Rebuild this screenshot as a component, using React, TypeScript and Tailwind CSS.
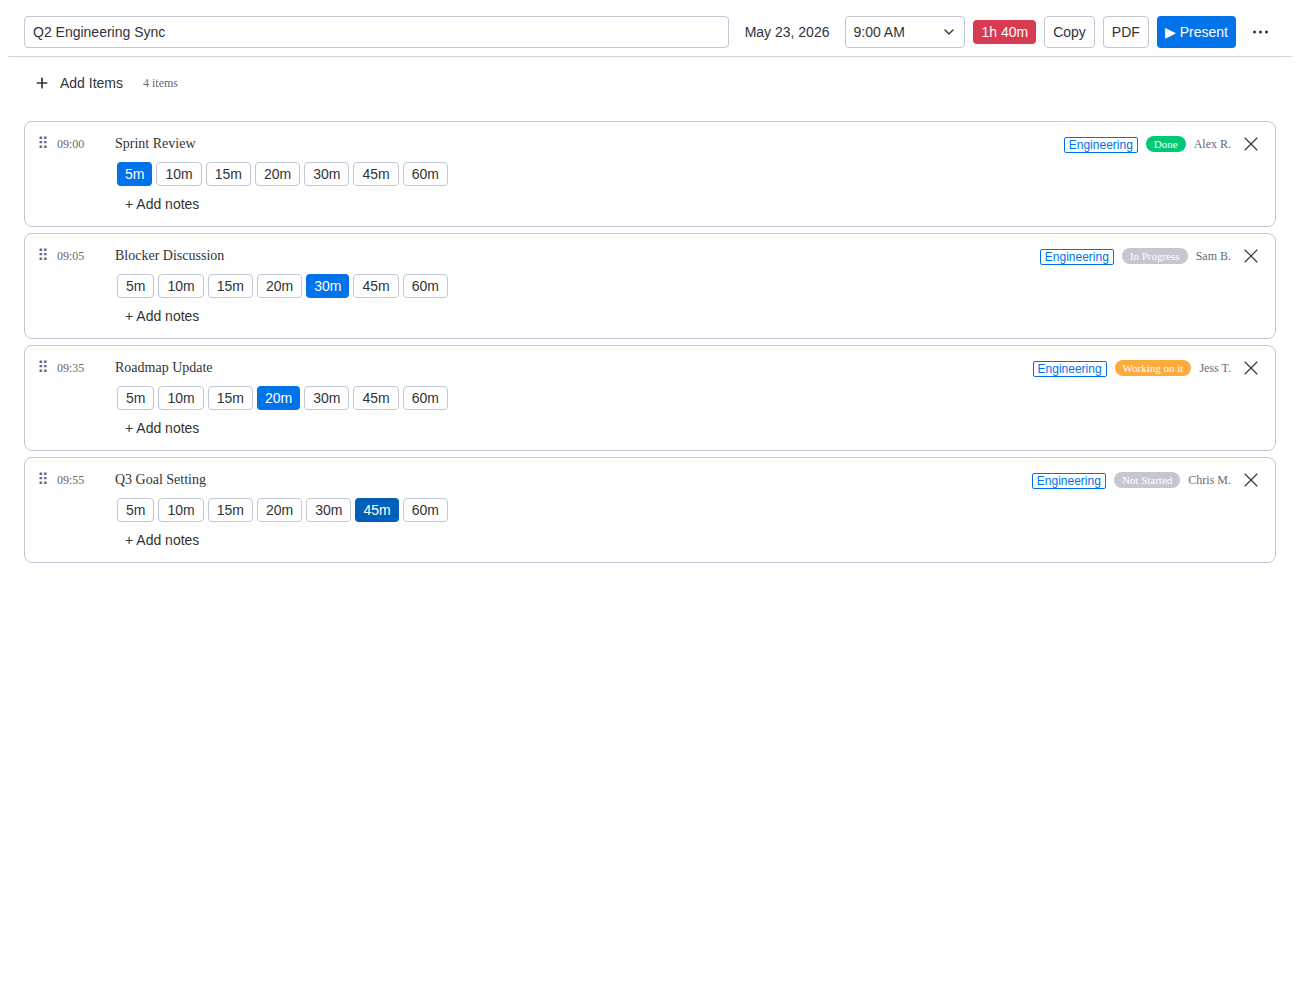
import { ChevronDown, Plus, X } from 'lucide-react'

interface Item {
  time: string
  title: string
  owner: string
  status: string
  statusClass: string
  selected: string
  selectedClass: string
}

const durations = ['5m', '10m', '15m', '20m', '30m', '45m', '60m']

const items: Item[] = [
  { time: '09:00', title: 'Sprint Review', owner: 'Alex R.', status: 'Done', statusClass: 'bg-[#00c875]', selected: '5m', selectedClass: 'bg-[#0073ea]' },
  { time: '09:05', title: 'Blocker Discussion', owner: 'Sam B.', status: 'In Progress', statusClass: 'bg-[#c5c7d0]', selected: '30m', selectedClass: 'bg-[#0073ea]' },
  { time: '09:35', title: 'Roadmap Update', owner: 'Jess T.', status: 'Working on it', statusClass: 'bg-[#fdab3d]', selected: '20m', selectedClass: 'bg-[#0073ea]' },
  { time: '09:55', title: 'Q3 Goal Setting', owner: 'Chris M.', status: 'Not Started', statusClass: 'bg-[#c5c7d0]', selected: '45m', selectedClass: 'bg-[#0060b9]' },
]

function AgendaCard({ item }: { item: Item }) {
  return (
    <div className="flex border border-[#c3c6d4] rounded-lg pl-3 pr-[17px] pt-3 pb-[10px] font-['Liberation_Serif',serif]">
      <div className="flex items-start w-[78px] shrink-0">
        <span className="w-5 h-5 leading-5 text-[16px] text-[#676879] font-['DejaVu_Sans',sans-serif]">⠿</span>
        <span className="text-xs leading-5 text-[#676879]">{item.time}</span>
      </div>
      <div className="flex-1 min-w-0">
        <div className="flex items-center justify-between h-5">
          <span className="text-sm text-[#323338]">{item.title}</span>
          <div className="flex items-center">
            <span className="px-1 h-4 mt-[2px] flex items-center border border-[#0073ea] rounded-[2px] text-xs text-[#0073ea] font-['Liberation_Sans',sans-serif]">
              Engineering
            </span>
            <span className={`ml-2 px-2 h-4 flex items-center rounded-full text-[11px] text-white ${item.statusClass}`}>
              {item.status}
            </span>
            <span className="ml-2 text-xs text-[#676879]">{item.owner}</span>
            <button className="ml-[13px] w-[14px] h-[14px] flex items-center justify-center text-[#323338]">
              <X size={24} strokeWidth={1.1} className="shrink-0" />
            </button>
          </div>
        </div>
        <div className="flex gap-1 ml-[2px] mt-2 font-['Liberation_Sans',sans-serif]">
          {durations.map((d) => (
            <button
              key={d}
              className={
                d === item.selected
                  ? `h-6 px-2 rounded text-sm text-white ${item.selectedClass}`
                  : 'h-6 px-2 border border-[#c3c6d4] rounded text-sm text-[#323338] bg-white'
              }
            >
              {d}
            </button>
          ))}
        </div>
        <button className="block ml-[2px] mt-[6px] h-6 px-2 text-sm text-[#323338] font-['Liberation_Sans',sans-serif]">+ Add notes</button>
      </div>
    </div>
  )
}

export default function App() {
  return (
    <div className="min-h-screen bg-white font-['Liberation_Sans',sans-serif] text-[#323338]">
      <div className="flex items-center gap-2 mx-2 px-4 pt-4 pb-2 border-b border-[#d0d4e4]">
        <input
          defaultValue="Q2 Engineering Sync"
          className="flex-1 min-w-0 h-8 px-2 border border-[#c3c6d4] rounded text-sm text-[#323338]"
        />
        <span className="px-2 text-sm">May 23, 2026</span>
        <div className="relative w-[120px] h-8">
          <select defaultValue="9:00 AM" className="w-full h-8 pl-[7px] pr-2 appearance-none border border-[#c3c6d4] rounded text-sm bg-white">
            <option>9:00 AM</option>
          </select>
          <ChevronDown size={16} className="absolute right-2 top-2 pointer-events-none" />
        </div>
        <span className="h-6 px-2 flex items-center rounded bg-[#d83a52] text-sm text-white">1h 40m</span>
        <button className="h-8 px-2 border border-[#c3c6d4] rounded text-sm">Copy</button>
        <button className="h-8 px-2 border border-[#c3c6d4] rounded text-sm">PDF</button>
        <button className="h-8 px-2 rounded bg-[#0073ea] text-sm text-white">▶ Present</button>
        <button className="p-2 text-[#323338]">
          <svg width="16" height="16" viewBox="0 0 16 16" fill="currentColor" className="block">
            <circle cx="2.5" cy="8" r="1.5" />
            <circle cx="8.5" cy="8" r="1.5" />
            <circle cx="14.5" cy="8" r="1.5" />
          </svg>
        </button>
      </div>

      <div className="flex items-center h-[52px] px-6">
        <button className="flex items-center gap-2 px-2 text-sm">
          <Plus size={16} strokeWidth={2.5} className="ml-[2px] mr-[1px]" />
          <span className="ml-[1px]">Add Items</span>
        </button>
        <span className="ml-3 text-xs text-[#676879] font-['Liberation_Serif',serif]">4 items</span>
      </div>

      <div className="flex flex-col gap-[6px] px-6 mt-3">
        {items.map((item) => (
          <AgendaCard key={item.time} item={item} />
        ))}
      </div>
    </div>
  )
}
